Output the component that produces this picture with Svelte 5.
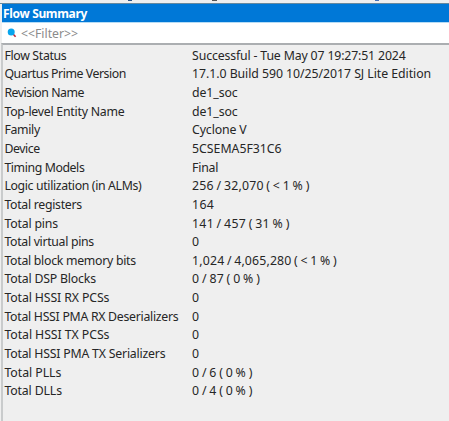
<script>
  // label, label width, value, value width
  const rows = [
    ['Flow Status', 62, 'Successful - Tue May 07 19:27:51 2024', 213.5],
    ['Quartus Prime Version', 121.5, '17.1.0 Build 590 10/25/2017 SJ Lite Edition', 239],
    ['Revision Name', 79.5, 'de1_soc', 45.5],
    ['Top-level Entity Name', 120, 'de1_soc', 45.5],
    ['Family', 35.5, 'Cyclone V', 54.5],
    ['Device', 35.5, '5CSEMA5F31C6', 89.5],
    ['Timing Models', 80, 'Final', 26],
    ['Logic utilization (in ALMs)', 137, '256 / 32,070 ( < 1 % )', 117.5],
    ['Total registers', 77.5, '164', 22],
    ['Total pins', 53.5, '141 / 457 ( 31 % )', 97.5],
    ['Total virtual pins', 89.5, '0', 8],
    ['Total block memory bits', 131.5, '1,024 / 4,065,280 ( < 1 % )', 144.7],
    ['Total DSP Blocks', 91.5, '0 / 87 ( 0 % )', 68],
    ['Total HSSI RX PCSs', 105, '0', 8],
    ['Total HSSI PMA RX Deserializers', 174, '0', 8],
    ['Total HSSI TX PCSs', 105, '0', 8],
    ['Total HSSI PMA TX Serializers', 161, '0', 8],
    ['Total PLLs', 57, '0 / 6 ( 0 % )', 60.5],
    ['Total DLLs', 57.5, '0 / 4 ( 0 % )', 60.5]
  ];

  // Tracks the text so that it fills the given width.
  function fit(node, width) {
    const n = node.textContent.length;
    if (n < 2) return;
    const natural = node.getBoundingClientRect().width;
    node.style.letterSpacing = `${(width - natural) / n}px`;
  }
</script>

<div class="panel">
  <div class="above"><i class="tail one"></i><i class="tail two"></i><i class="tail three"></i></div>
  <header><span use:fit={84}>Flow Summary</span></header>
  <div class="filter">
    <svg width="10" height="10" viewBox="0 0 10 10">
      <path d="M5.8 5.8 8.6 8.8" stroke="#bd2534" stroke-width="1.6" />
      <circle cx="4.2" cy="4" r="3.5" fill="#08a5ed" />
    </svg>
    <span use:fit={57}>&lt;&lt;Filter&gt;&gt;</span>
  </div>
  <div class="table">
    {#each rows as [label, lw, value, vw]}
      <div class="row">
        <div class="label"><span use:fit={lw}>{label}</span></div>
        <div class="value" class:usage={value.includes(' / ')}><span use:fit={vw}>{value}</span></div>
      </div>
    {/each}
  </div>
</div>

<style>
  :global(body) { margin: 0; background: #efefef; }
  .panel {
    width: 449px; height: 421px; overflow: hidden; box-sizing: border-box;
    display: flex; flex-direction: column; background: #efefef;
    color: #262626; font: 12.3px/18.67px "Noto Sans", "Open Sans", sans-serif;
    font-kerning: normal;
  }
  span { display: inline-block; white-space: pre; }
  .above { height: 3px; flex: none; position: relative; border-bottom: 1px solid #66899f; }
  .tail { position: absolute; top: 0; height: 1px; width: 4px; background: #2d5488; }
  .one { left: 128px; }
  .two { left: 212px; width: 5px; background: #555; }
  .three { left: 375px; background: #4672b8; }
  header {
    height: 18px; flex: none; margin-left: 2px; padding-left: 1px;
    background: #0078d7; color: #fff; font-weight: 700; font-size: 12px; line-height: 19px;
    border-bottom: 1px solid #b6dcf5;
  }
  .filter {
    height: 20px; flex: none; margin-left: 2px; padding-left: 5px;
    background: #fff; color: #8b8b8b; display: flex; align-items: center; gap: 4px;
  }
  .filter span { line-height: 20px; padding-top: 2px; }
  .table {
    flex: 1; margin-left: 1px; padding: 1.6px 0 0 1.4px;
    border-left: 2px solid #c9cbcc; border-top: 2px solid #abaeb1;
  }
  .row { height: 18.67px; display: flex; }
  .label { width: 187.7px; flex: none; }
  .usage { word-spacing: -0.8px; }
</style>
